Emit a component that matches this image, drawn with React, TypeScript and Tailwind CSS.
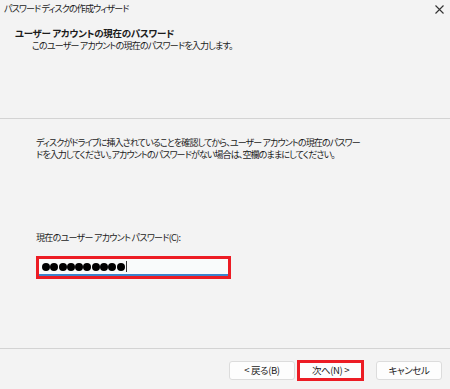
const jp = "font-['Noto_Sans_CJK_JP','Noto_Sans',sans-serif] [font-feature-settings:'palt']";

const Button = ({ label }: { label: string }) => (
  <div className="w-[66px] h-[19px] flex items-center justify-center bg-[#fdfdfd] border border-[#dcdcdc] rounded-[3px] text-[9.5px] tracking-[-0.4px] text-[#1b1b1b]">
    {label}
  </div>
);

export default function App() {
  return (
    <div className={`w-[450px] h-[389px] bg-[#f3f3f3] flex flex-col text-[#1b1b1b] ${jp}`}>
      {/* title bar */}
      <div className="h-[17px] flex items-center justify-between pl-[4px] pr-[6px]">
        <span className="text-[9px] leading-[12px] tracking-[-0.85px] whitespace-nowrap">パスワード&nbsp;ディスクの作成ウィザード</span>
        <svg width="9" height="9" viewBox="0 0 9 9" className="mt-[2px]">
          <path d="M0.5 0.5 L8.5 8.5 M8.5 0.5 L0.5 8.5" stroke="#333" strokeWidth="1.1" />
        </svg>
      </div>

      {/* header */}
      <div className="h-[101px] pt-[11px] pl-[15px] flex flex-col gap-[1px]">
        <div className="text-[9.5px] leading-[11px] font-bold tracking-[-0.3px] whitespace-nowrap">ユーザー アカウントの現在のパスワード</div>
        <div className="text-[9px] leading-[11px] pl-[17px] tracking-[-0.8px] whitespace-nowrap">このユーザー&nbsp;アカウントの現在のパスワードを入力します。</div>
      </div>
      <div className="h-px bg-[#d3d3d3]" />

      {/* body */}
      <div className="flex-1 flex flex-col pl-[36px] pt-[18px]">
        <p className="text-[9px] leading-[12px] tracking-[-0.87px] whitespace-nowrap">
          ディスクがドライブに挿入されていることを確認してから、ユーザー&nbsp;アカウントの現在のパスワー
          <br />
          ドを入力してください。アカウントのパスワードがない場合は、空欄のままにしてください。
        </p>
        <div className="mt-[71px] text-[9px] leading-[12px] tracking-[-0.7px] whitespace-nowrap">現在のユーザー&nbsp;アカウント&nbsp;パスワード(C):</div>
        <div className="mt-[12px] w-[195px] h-[23px] border-[3px] border-[#ec1c24]">
          <div className="h-full bg-[#f9fbfb] border-b-2 border-[#3b84cd] flex items-center pl-[3px] gap-[0.3px]">
            {Array.from({ length: 10 }).map((_, i) => (
              <div key={i} className="w-[8px] h-[8px] rounded-full bg-black" />
            ))}
            <div className="ml-[1px] w-px h-[11px] bg-[#333]" />
          </div>
        </div>
      </div>

      <div className="h-px bg-[#d3d3d3]" />
      {/* footer */}
      <div className="h-[40px] flex items-start justify-end pr-[8px] pt-[12px]">
        <Button label="< 戻る(B)" />
        <div className="ml-[2px] -mt-px w-[67px] h-[21px] border-[3px] border-[#ec1c24] bg-[#fdfdfd] flex items-center justify-center text-[9.5px] tracking-[-0.4px]">
          次へ(N) &gt;
        </div>
        <div className="ml-[12px]">
          <Button label="キャンセル" />
        </div>
      </div>
    </div>
  );
}
